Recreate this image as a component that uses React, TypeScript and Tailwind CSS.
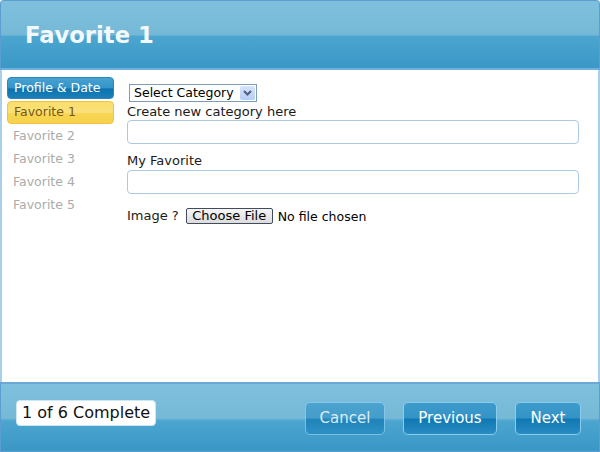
import React from 'react'

const font = { fontFamily: '"DejaVu Sans", Verdana, sans-serif' }

function NavButton({ label, width, faded }: { label: string; width: string; faded?: boolean }) {
  return (
    <button
      className={`h-[33px] ${width} rounded-[5px] border border-[#86cdf0] bg-[linear-gradient(to_bottom,#3c9bcb_0%,#3494c6_48%,#0f78b2_52%,#2a8cc2_100%)] text-[15px] text-white ${faded ? 'opacity-75' : ''}`}
    >
      {label}
    </button>
  )
}

export default function App() {
  const others = ['Favorite 2', 'Favorite 3', 'Favorite 4', 'Favorite 5']

  return (
    <div style={font} className="flex h-[452px] w-[600px] flex-col overflow-hidden bg-white">
      {/* Header */}
      <div className="flex h-[70px] shrink-0 items-center rounded-t-[4px] border border-b-2 border-[#5a9fd0] border-b-[#6fb0de] bg-[linear-gradient(to_bottom,#7ec0dd_0%,#76b9d7_50%,#4ba5cf_53%,#3a97c6_100%)] pl-[24px]">
        <h1 className="mt-[1px] text-[22.7px] font-bold text-[#f2f8fc]">Favorite 1</h1>
      </div>

      {/* Body */}
      <div className="flex flex-1 border-x-2 border-[#a9d0ea] bg-white">
        <div className="flex w-[112px] shrink-0 flex-col pl-[5px] pt-[7px]">
          <div className="flex h-[22px] items-center rounded-[4px] border border-[#2b86bb] bg-[linear-gradient(to_bottom,#45a2d2_0%,#3595c9_48%,#0b73ad_55%,#1b80b8_100%)] pl-[6px] text-[12.5px] text-white">
            Profile &amp; Date
          </div>
          <div className="mt-[2px] flex h-[23px] items-center rounded-[4px] border border-[#efc53e] bg-[linear-gradient(to_bottom,#fbde6c_0%,#f9e07a_50%,#f7d653_55%,#f6d24c_100%)] pl-[6px] text-[12.5px] text-[#7a5812]">
            Favorite 1
          </div>
          <div className="mt-[1px] flex flex-col">
            {others.map((o) => (
              <div key={o} className="flex h-[23px] items-center pl-[6px] text-[12.5px] text-[#ababab]">
                {o}
              </div>
            ))}
          </div>
        </div>

        <div className="flex flex-1 flex-col pl-[13px] pr-[19px] pt-[14px] text-[13px] text-[#1a1a1a]">
          <div className="ml-[2px] flex h-[18px] w-[128px] items-center justify-between border border-[#7f9db9] pl-[4px] pr-[1px] text-[12.5px] text-black">
            <span>Select Category</span>
            <span className="flex h-[14px] w-[15px] items-center justify-center rounded-[2px] bg-[linear-gradient(to_bottom,#d6e4fb,#b7cdf4)]">
              <svg width="9" height="6" viewBox="0 0 9 6">
                <path d="M1 1l3.5 3.5L8 1" stroke="#4d6185" strokeWidth="2" fill="none" />
              </svg>
            </span>
          </div>
          <div className="mt-[2px] leading-[15px]">Create new category here</div>
          <div className="mt-[1px] h-[24px] rounded-[4px] border border-[#a9c9e4] bg-white" />
          <div className="mt-[9px] leading-[15px]">My Favorite</div>
          <div className="mt-[2px] h-[24px] rounded-[4px] border border-[#a9c9e4] bg-white" />
          <div className="mt-[13px] flex items-center leading-[16px]">
            <span>Image ?</span>
            <button className="ml-[7px] h-[16px] w-[87px] rounded-[2px] border border-[#3f4d5e] bg-[linear-gradient(to_bottom,#f6f6f6,#dcdcdc)] text-[13px] leading-[12px] text-black">
              Choose File
            </button>
            <span className="ml-[5px] mt-[2px] text-[12.5px] text-black">No file chosen</span>
          </div>
        </div>
      </div>

      {/* Footer */}
      <div className="flex h-[70px] shrink-0 items-center border border-t-2 border-[#5a9fd0] border-t-[#6aa9d6] bg-[linear-gradient(to_bottom,#7ec0dd_0%,#76b9d7_51%,#4ba5cf_55%,#3a97c6_100%)] pl-[15px] pr-[18px]">
        <div className="mb-[10px] flex h-[26px] items-center rounded-[4px] border border-[#cfe6f3] bg-white px-[5px] text-[16px] text-[#111]">
          1 of 6 Complete
        </div>
        <div className="ml-auto mt-[2px] flex gap-[18px]">
          <NavButton label="Cancel" width="w-[80px]" faded />
          <NavButton label="Previous" width="w-[94px]" />
          <NavButton label="Next" width="w-[66px]" />
        </div>
      </div>
    </div>
  )
}
